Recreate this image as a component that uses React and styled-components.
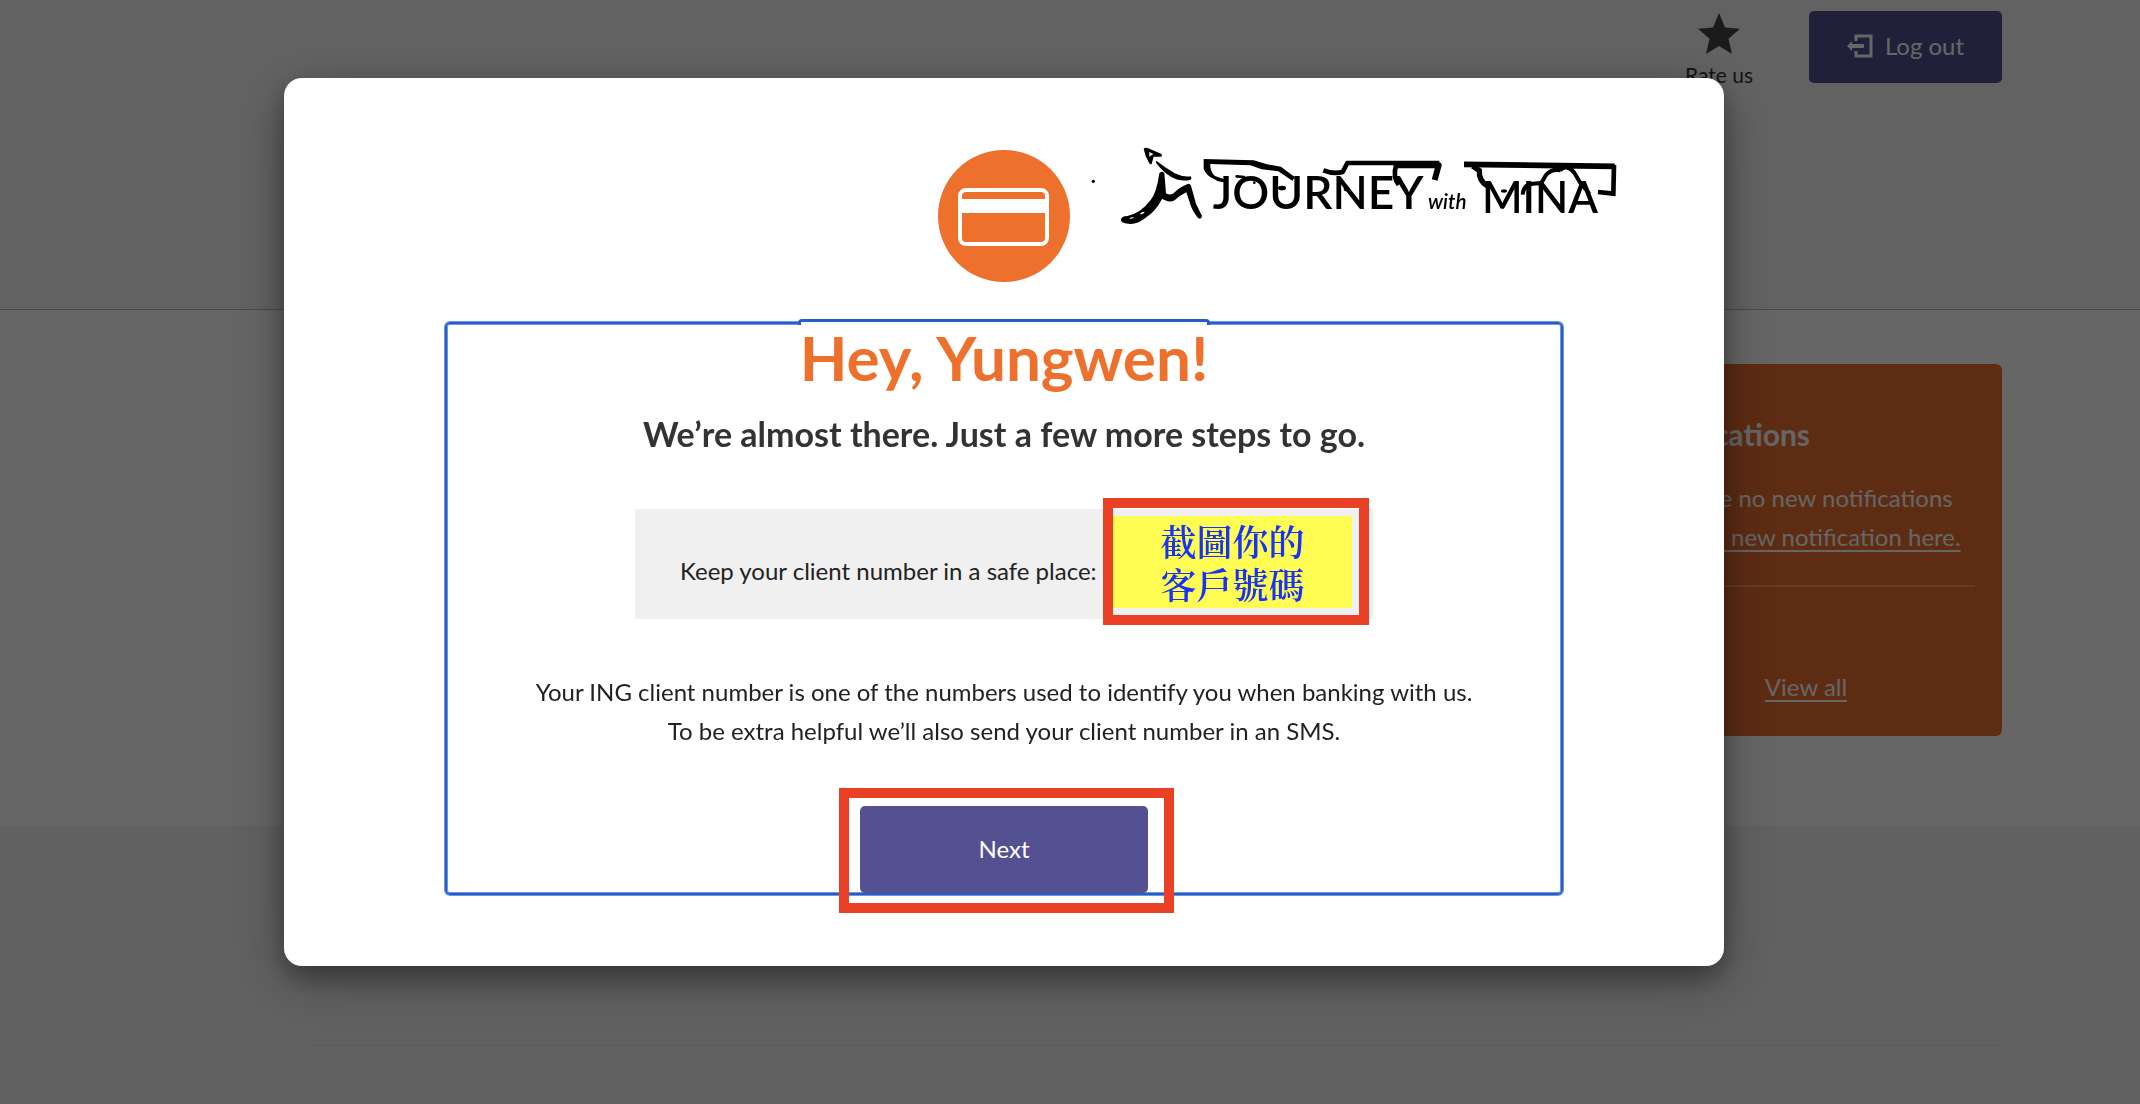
import React from "react";
import styled, { createGlobalStyle } from "styled-components";

const GlobalStyle = createGlobalStyle`
  *, *::before {
    box-sizing: border-box;
  }
  body {
    margin: 0;
    background: #fff;
    color: #222;
    font-family: Lato, "Open Sans", "Noto Sans CJK TC", sans-serif;
    font-size: 24px;
    line-height: 39px;
  }
  h1, h2, p {
    margin: 0;
  }
`;

const Page = styled.div`
  display: flex;
  flex-direction: column;
  min-height: 100vh;
`;

const Header = styled.header`
  display: flex;
  justify-content: flex-end;
  align-items: flex-start;
  gap: 56px;
  padding: 11px 138px 220px 310px;
  background: #f6f6f6;
  border-bottom: 1px solid #bbb;
`;

const RateLink = styled.a`
  display: flex;
  flex-direction: column;
  align-items: center;
  gap: 6px;
  color: #333;
  font-size: 21px;
  line-height: 28px;
  text-decoration: none;
`;

const Button = styled.button`
  display: flex;
  align-items: center;
  justify-content: center;
  gap: 12px;
  width: ${(props) => (props.$wide ? "288px" : "193px")};
  height: ${(props) => (props.$wide ? "87px" : "72px")};
  padding: 0 0 3px;
  border: 0;
  border-radius: 5px;
  background: #535192;
  color: #fff;
  font-family: inherit;
  font-size: 24px;
  cursor: pointer;
`;

const Main = styled.main`
  display: flex;
  justify-content: flex-end;
  padding: 54px 138px 90px 310px;
`;

const Card = styled.section`
  display: flex;
  flex-direction: column;
  width: 392px;
  padding: 50px 27px 30px;
  border-radius: 6px;
  background: #eb6e2f;
  color: #fff;
`;

const CardTitle = styled.h2`
  margin-bottom: 24px;
  font-size: 30px;
  line-height: 40px;
`;

const CardLink = styled.a`
  color: inherit;
  text-underline-offset: 4px;
`;

const CardFooter = styled.div`
  display: flex;
  justify-content: center;
  margin-top: 29px;
  padding-top: 80px;
  border-top: 2px solid rgba(255, 255, 255, 0.3);
`;

const Footer = styled.footer`
  flex: 1;
  padding: 219px 138px 0 310px;
  background: #f3f3f3;
`;

const Rule = styled.hr`
  margin: 0;
  border: 0;
  border-top: 1px solid #e4e4e4;
`;

const Overlay = styled.div`
  position: fixed;
  inset: 0;
  display: flex;
  justify-content: center;
  align-items: flex-start;
  padding: 78px 132px 0 0;
  background: rgba(0, 0, 0, 0.6);
`;

const Modal = styled.div`
  position: relative;
  display: flex;
  flex-direction: column;
  align-items: center;
  width: 72%;
  max-width: 1440px;
  padding: 72px 161px 71px;
  border-radius: 18px;
  background: #fff;
  box-shadow: 0 12px 24px rgba(0, 0, 0, 0.3), 0 14px 60px rgba(0, 0, 0, 0.3);
`;

const Logo = styled.svg`
  position: absolute;
  top: 52px;
  left: 796px;
`;

const Content = styled.div`
  display: flex;
  flex-direction: column;
  align-items: center;
  width: 100%;
  margin-top: 40px;
  border: 2px solid #265dc8;
  border-radius: 5px;
  box-shadow: 0 0 0 1px #6f97e0, inset 0 0 0 1px #6f97e0;
  text-align: center;
`;

const Title = styled.h1`
  position: relative;
  padding: 0 2px;
  color: #ed702d;
  font-size: 62px;
  line-height: 66px;

  /* the focus ring steps up where the heading is taller than the box */
  &::before {
    content: "";
    position: absolute;
    top: -5px;
    left: 0;
    right: 0;
    height: 6px;
    border: 3px solid #265dc8;
    border-bottom: 0;
    border-radius: 4px 4px 0 0;
    background: #fff;
  }
`;

const Subtitle = styled.h2`
  margin-top: 22px;
  color: #333;
  font-size: 34px;
  line-height: 44px;
`;

const ClientNumber = styled.div`
  position: relative;
  display: flex;
  width: 738px;
  height: 110px;
  margin-top: 53px;
  padding: 42px 45px 0;
  background: #f0f0f0;
`;

const Mark = styled.div`
  position: absolute;
  border: 10px solid #ea4025;
  pointer-events: none;
`;

const NumberMark = styled(Mark)`
  top: -11px;
  right: 4px;
  width: 266px;
  height: 127px;
  padding: 8px 7px 7px 0;
`;

const NumberLabel = styled.div`
  padding-top: 3px;
  height: 92px;
  background: #fffd54;
  color: #1733f5;
  font-family: "Noto Serif CJK TC", "Noto Sans CJK TC", serif;
  font-size: 36px;
  font-weight: 600;
  line-height: 43px;
`;

const ButtonMark = styled(Mark)`
  inset: -18px -26px -20px -21px;
`;

const Text = styled.p`
  margin: 53px 0 56px;
`;

const Action = styled.div`
  position: relative;
`;

const Star = () => (
  <svg width="42" height="44" viewBox="0 0 42 44" aria-hidden="true">
    <path
      d="M21 2l6 14.500 15 1.200-11.500 10 3.500 15.300-13-8-13 8 3.500-15.300L0 17.700l15-1.200z"
      fill="#444"
    />
  </svg>
);

const LogoutIcon = () => (
  <svg width="26" height="24" viewBox="0 0 26 24" aria-hidden="true">
    <path d="M9 7V2h15v20H9v-5" fill="none" stroke="#fff" strokeWidth="3" />
    <path d="M0 12l5-5v3h12v4H5v3z" fill="#fff" />
  </svg>
);

const CardIcon = () => (
  <svg width="132" height="132" viewBox="0 0 132 132" aria-hidden="true">
    <circle cx="66" cy="66" r="66" fill="#ed702d" />
    <rect
      x="22"
      y="40"
      width="87"
      height="54"
      rx="6"
      fill="none"
      stroke="#fff"
      strokeWidth="4"
    />
    <path d="M22 49h87v14H22z" fill="#fff" />
  </svg>
);

const JourneyLogo = () => (
  <Logo
    width="560"
    height="110"
    viewBox="0 0 1680 330"
    role="img"
    aria-label="Journey with Mina"
  >
    <circle cx="40" cy="154" r="5" />
    <path d="M191 56q4-5 12-2l40 17q6 5 0 9l-22 0-6 22q-4 3-8-4-13-22-16-42zm17 10l0 14 12-8z" fillRule="evenodd" />
    <path d="M229 92q26 20 55 38 25 12 48 9 5 8-2 11-30 6-56-9-25-15-46-43z" />
    <path
      d="M238 130q7-9 15-1l5 61q8 6 21 1 22-22 46-30 8 1 9 10l14 50 18 37q-2 12-12 6-19-23-25-47l-10-30q-18 8-35 24-15 7-28 0-10-4-10-4-18 36-51 58-26 20-50 16-24-1-22-14 3-9 19-9 40-8 70-48 18-22 26-80zM148 266q10 2 15-5-12 0-15 5zm31-13q12 0 15-8-12 1-15 8z"
      fillRule="evenodd"
    />
    <path d="M371 87l150 4 40 12 42 7 42 32-8 10-42-28-50-6-34-12-120-4q-2 22 14 36l28 10q6 10-4 9-16-1-27-10-22-8-31-30z" />
    <g fill="none" stroke="#000" strokeWidth="14" strokeLinejoin="round">
      <path d="M730 121q30 12 58 5l14-27h276" />
      <path d="M946 106h130l-12 44" strokeWidth="18" />
      <path d="M948 106q-10 36 8 58" />
      <path d="M470 139l22 2" strokeWidth="8" strokeLinecap="round" />
    </g>
    <g fill="none" stroke="#000" strokeWidth="12">
      <path d="M1152 103l452 6" strokeWidth="17" />
      <path d="M1602 105l-2 86-46-5" strokeWidth="14" />
      <path d="M1178 108l20 14q-2 30 24 46" strokeWidth="16" />
      <path d="M1328 194q2-30 30-33l26-2 14-24q18-20 44-14" />
      <path d="M1440 121q20-20 42 6l18 30 28 34" />
    </g>
    <ellipse cx="606" cy="174" rx="12" ry="7" />
    <circle cx="523" cy="158" r="4" />
    <circle cx="690" cy="172" r="5" />
    <ellipse cx="800" cy="177" rx="9" ry="7" />
    <ellipse cx="1272" cy="183" rx="9" ry="5" />
    <g fontFamily="Lato, sans-serif" fontWeight="600">
      <text x="398" y="236" fontSize="138">
        JOURNEY
      </text>
      <text x="1044" y="236" fontSize="62" fontStyle="italic">
        with
      </text>
      <text x="1206" y="250" fontSize="130">
        MINA
      </text>
    </g>
  </Logo>
);

const App = () => {
  return (
    <>
      <GlobalStyle />
      <Page>
        <Header>
          <RateLink href="#rate">
            <Star />
            Rate us
          </RateLink>
          <Button type="button">
            <LogoutIcon />
            Log out
          </Button>
        </Header>
        <Main>
          <Card>
            <CardTitle>Notifications</CardTitle>
            <p>You have no new notifications</p>
            <CardLink href="#create">Create a new notification here.</CardLink>
            <CardFooter>
              <CardLink href="#all">View all</CardLink>
            </CardFooter>
          </Card>
        </Main>
        <Footer>
          <Rule />
        </Footer>
      </Page>
      <Overlay>
        <Modal role="dialog" aria-modal="true" aria-labelledby="title">
          <CardIcon />
          <JourneyLogo />
          <Content>
            <Title id="title">Hey, Yungwen!</Title>
            <Subtitle>We’re almost there. Just a few more steps to go.</Subtitle>
            <ClientNumber>
              Keep your client number in a safe place:
              <NumberMark>
                <NumberLabel>
                  截圖你的
                  <br />
                  客戶號碼
                </NumberLabel>
              </NumberMark>
            </ClientNumber>
            <Text>
              Your ING client number is one of the numbers used to identify you
              when banking with us.
              <br />
              To be extra helpful we’ll also send your client number in an SMS.
            </Text>
            <Action>
              <Button type="button" $wide>
                Next
              </Button>
              <ButtonMark />
            </Action>
          </Content>
        </Modal>
      </Overlay>
    </>
  );
};

export default App;
